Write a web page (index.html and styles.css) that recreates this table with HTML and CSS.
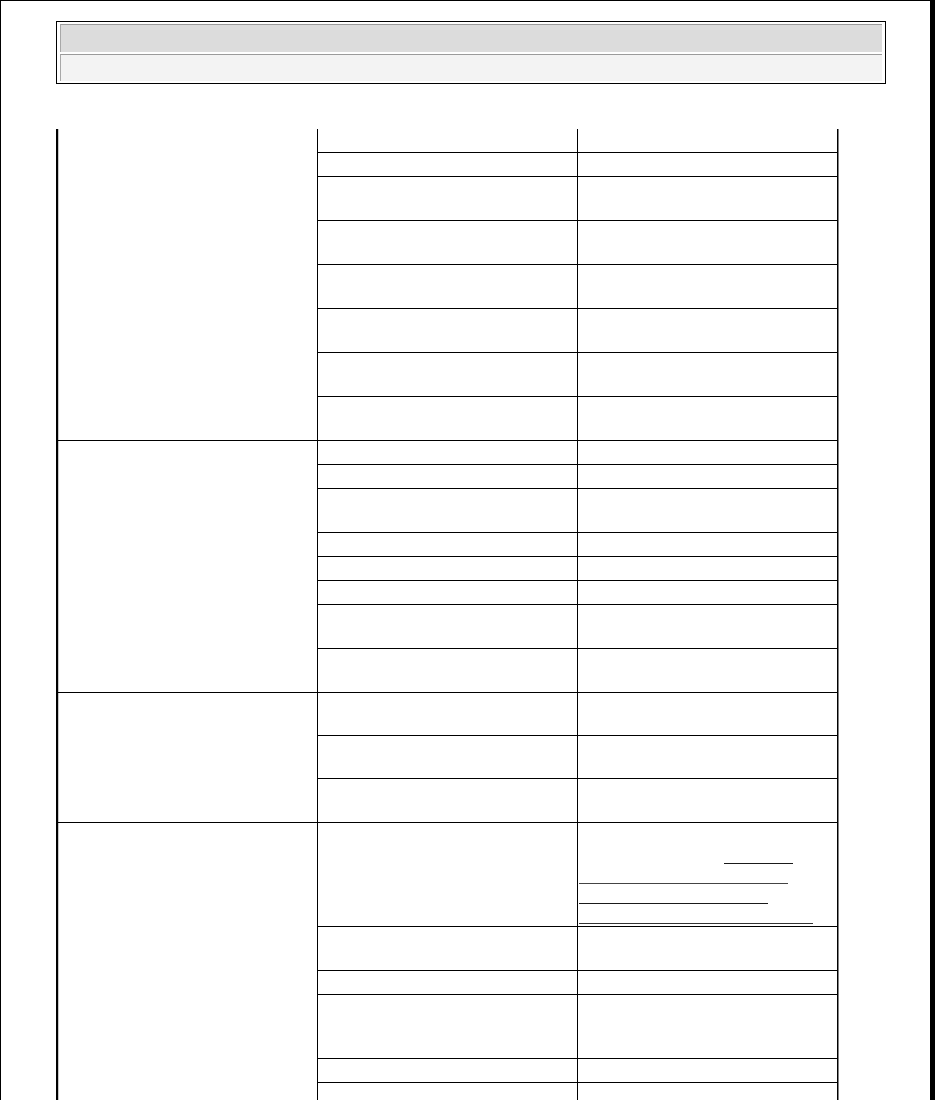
FILE: index.html
```html
<!DOCTYPE html>
<html lang="en">
<head>
<meta charset="utf-8">
<title>Table</title>
<link rel="stylesheet" href="styles.css">
</head>
<body>
  <div class="hdr">
    <div class="hdr-cell hdr-title"></div>
    <div class="hdr-cell hdr-sub"></div>
  </div>

  <div class="grid">
    <div class="c1 span8"></div>
    <div class="c r1"></div><div class="c c3 r1"></div>
    <div class="c r1"></div><div class="c c3 r1"></div>
    <div class="c r2"></div><div class="c c3 r2"></div>
    <div class="c r2"></div><div class="c c3 r2"></div>
    <div class="c r2"></div><div class="c c3 r2"></div>
    <div class="c r2"></div><div class="c c3 r2"></div>
    <div class="c r2"></div><div class="c c3 r2"></div>
    <div class="c r2"></div><div class="c c3 r2"></div>

    <div class="c1 span8"></div>
    <div class="c r1"></div><div class="c c3 r1"></div>
    <div class="c r1"></div><div class="c c3 r1"></div>
    <div class="c r2"></div><div class="c c3 r2"></div>
    <div class="c r1"></div><div class="c c3 r1"></div>
    <div class="c r1"></div><div class="c c3 r1"></div>
    <div class="c r1"></div><div class="c c3 r1"></div>
    <div class="c r2"></div><div class="c c3 r2"></div>
    <div class="c r2"></div><div class="c c3 r2"></div>

    <div class="c1 span3"></div>
    <div class="c r2b"></div><div class="c c3 r2b"></div>
    <div class="c r2b"></div><div class="c c3 r2b"></div>
    <div class="c r2"></div><div class="c c3 r2"></div>

    <div class="c1 span7"></div>
    <div class="c r5"></div>
    <div class="c c3 r5 links">
      <div class="ln"></div>
      <div class="ln"><span class="ul ul-a"></span></div>
      <div class="ln"><span class="ul ul-b"></span></div>
      <div class="ln"><span class="ul ul-c"></span></div>
      <div class="ln"><span class="ul ul-d"></span></div>
    </div>
    <div class="c r2"></div><div class="c c3 r2"></div>
    <div class="c r1"></div><div class="c c3 r1"></div>
    <div class="c r3"></div><div class="c c3 r3"></div>
    <div class="c r1"></div><div class="c c3 r1"></div>
    <div class="c r1"></div><div class="c c3 r1"></div>
    <div class="c r1"></div><div class="c c3 r1"></div>
  </div>
</body>
</html>
```

FILE: styles.css
```css
html {
  margin: 0;
  padding: 0;
  background: #fff;
}

body {
  margin: 0;
  box-sizing: border-box;
  min-height: 1100px;
  border-top: 1px solid #000;
  border-left: 1px solid #000;
  border-right: 5px solid #000;
  padding: 20px 0 0 55px;
  font-family: "Liberation Serif", "Times New Roman", serif;
  font-size: 16px;
  color: #000;
  background: #fff;
}

/* header box */
.hdr {
  box-sizing: border-box;
  width: 830px;
  height: 63px;
  border: 1px solid #000;
  padding: 2px 3px;
  display: flex;
  flex-direction: column;
  gap: 2px;
}

.hdr-cell {
  box-sizing: border-box;
  border-top: 1px solid #9a9a9a;
  border-left: 1px solid #a8a8a8;
}

.hdr-title {
  height: 28px;
  background: #dcdcdc;
}

.hdr-sub {
  height: 27px;
  background: #f3f3f3;
}

/* main table */
.grid {
  margin-top: 45px;
  width: max-content;
  display: grid;
  grid-template-columns: 260px 260px 259px;
  border-left: 2px solid #000;
  border-right: 1px solid #000;
  box-shadow: 1px 0 0 #808080;
}

.c1 {
  grid-column: 1;
  box-sizing: border-box;
  border-right: 1px solid #000;
  border-bottom: 1px solid #000;
  box-shadow: inset 1px 0 0 #c8c8c8;
}

.span8 { grid-row: span 8; }
.span7 { grid-row: span 7; }
.span3 { grid-row: span 3; }

.c {
  box-sizing: border-box;
  border-right: 1px solid #000;
  border-bottom: 1px solid #000;
}

.c.c3 {
  border-right: none;
}

.r1 { height: 24px; }
.r2 { height: 44px; }
.r2b { height: 43px; }
.r3 { height: 64px; }
.r5 { height: 104px; }

.links {
  padding: 2px 0 0 1px;
  display: flex;
  flex-direction: column;
}

.ln {
  height: 20px;
  display: flex;
}

.ul {
  display: block;
  box-sizing: border-box;
  height: 19px;
  border-bottom: 1px solid #1a1a1a;
}

.ul-a { margin-left: 145px; width: 69px; }
.ul-b { width: 209px; border-bottom-color: #444; }
.ul-c { width: 189px; }
.ul-d { width: 234px; border-bottom-color: #333; }
```
